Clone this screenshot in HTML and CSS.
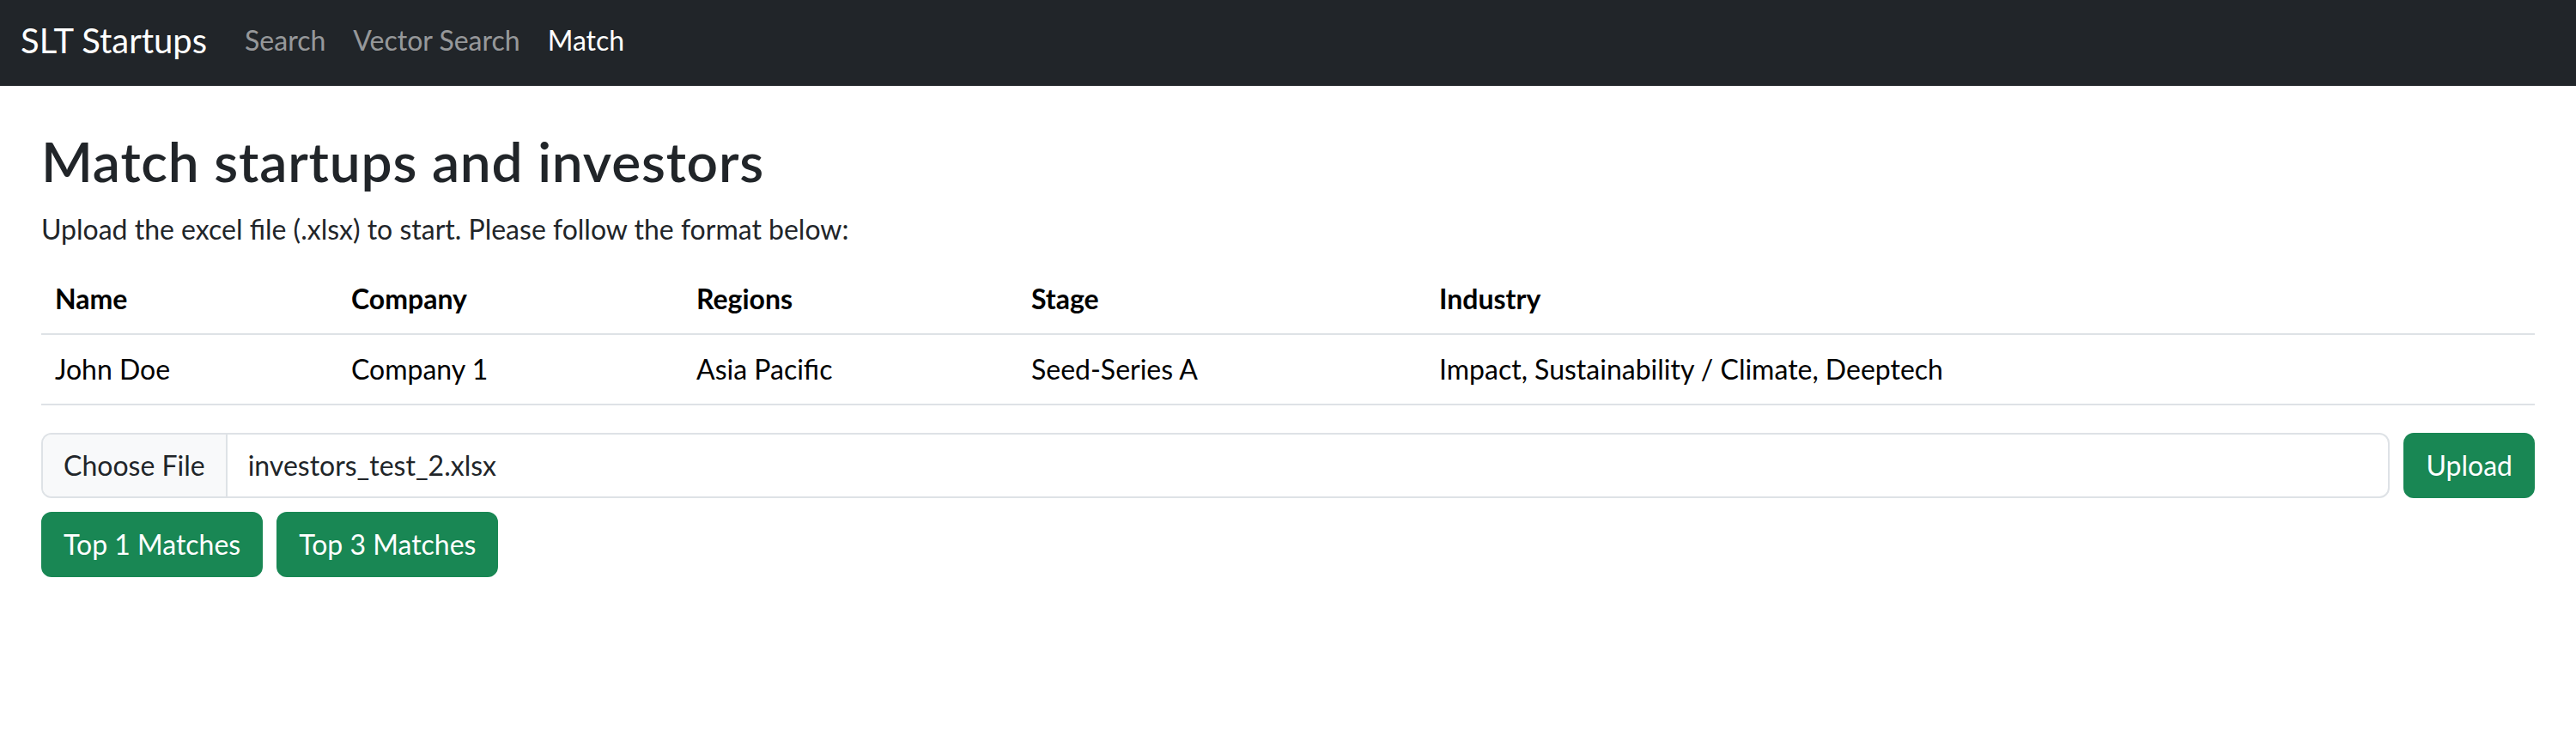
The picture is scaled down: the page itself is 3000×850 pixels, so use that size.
FILE: index.html
```html
<!DOCTYPE html>
<html lang="en">
<head>
<meta charset="utf-8">
<title>SLT Startups - Match</title>
<link rel="stylesheet" href="styles.css">
</head>
<body>
<nav class="navbar">
  <a class="brand" href="#">SLT Startups</a>
  <ul class="nav">
    <li><a class="nav-link" href="#">Search</a></li>
    <li><a class="nav-link" href="#">Vector Search</a></li>
    <li><a class="nav-link active" href="#">Match</a></li>
  </ul>
</nav>
<main class="container">
  <h2 class="title">Match startups and investors</h2>
  <p class="lead-text">Upload the excel file (.xlsx) to start. Please follow the format below:</p>
  <table class="table">
    <colgroup>
      <col class="c-name"><col class="c-company"><col class="c-regions"><col class="c-stage"><col class="c-industry">
    </colgroup>
    <thead>
      <tr><th>Name</th><th>Company</th><th>Regions</th><th>Stage</th><th>Industry</th></tr>
    </thead>
    <tbody>
      <tr><td>John Doe</td><td>Company 1</td><td>Asia Pacific</td><td>Seed-Series A</td><td>Impact, Sustainability / Climate, Deeptech</td></tr>
    </tbody>
  </table>
  <form class="upload-row">
    <div class="file-input">
      <span class="file-btn">Choose File</span>
      <span class="file-name">investors_test_2.xlsx</span>
    </div>
    <button type="button" class="btn btn-success">Upload</button>
  </form>
  <div class="actions">
    <button type="button" class="btn btn-success">Top 1 Matches</button>
    <button type="button" class="btn btn-success">Top 3 Matches</button>
  </div>
</main>
</body>
</html>
```
FILE: styles.css
```css
* { box-sizing: border-box; }
html, body { margin: 0; padding: 0; }
body {
  font-family: Lato, "Liberation Sans", sans-serif;
  font-size: 32px;
  line-height: 48px;
  color: #212529;
  background: #fff;
}

/* navbar */
.navbar {
  height: 100px;
  background: #212529;
  display: flex;
  align-items: center;
  padding: 0 24px 6px 24px;
}
.brand {
  font-size: 40px;
  line-height: 48px;
  color: #fff;
  text-decoration: none;
  margin-right: 28px;
}
.nav {
  list-style: none;
  margin: 0;
  padding: 0;
  display: flex;
}
.nav-link {
  display: block;
  padding: 0 16px;
  font-size: 32px;
  line-height: 48px;
  color: rgba(255,255,255,.55);
  text-decoration: none;
}
.nav-link.active { color: #fff; }

/* content */
.container {
  padding: 50px 48px 0 48px;
}
.title {
  margin: 0 0 16px 0;
  font-size: 64px;
  line-height: 76.8px;
  font-weight: 600;
  letter-spacing: 0.8px;
  color: #212529;
}
.lead-text {
  margin: 0 0 17px 0;
}

.table {
  width: 100%;
  border-collapse: collapse;
  table-layout: fixed;
  margin-bottom: 32px;
  color: #000;
}
.c-name { width: 345px; }
.c-company { width: 402px; }
.c-regions { width: 390px; }
.c-stage { width: 475px; }
.table th, .table td {
  text-align: left;
  padding: 16px;
  border-bottom: 2px solid #dee2e6;
  vertical-align: top;
  white-space: nowrap;
}
.table th { font-weight: 700; }
.table td { font-weight: 400; }

.upload-row {
  display: flex;
  gap: 16px;
  margin: 0;
}
.file-input {
  flex: 1;
  display: flex;
  border: 2px solid #dee2e6;
  border-radius: 12px;
  overflow: hidden;
  background: #fff;
}
.file-btn {
  background: #f8f9fa;
  padding: 12px 24px;
  border-right: 2px solid #dee2e6;
  color: #212529;
}
.file-name {
  padding: 12px 24px;
  color: #212529;
}

.btn {
  font-family: inherit;
  font-size: 32px;
  line-height: 48px;
  padding: 12px 24px;
  border: 2px solid transparent;
  border-radius: 12px;
  cursor: pointer;
}
.btn-success {
  background: #198754;
  border-color: #198754;
  color: #fff;
}
.actions {
  display: flex;
  gap: 16px;
  margin-top: 16px;
}
```
